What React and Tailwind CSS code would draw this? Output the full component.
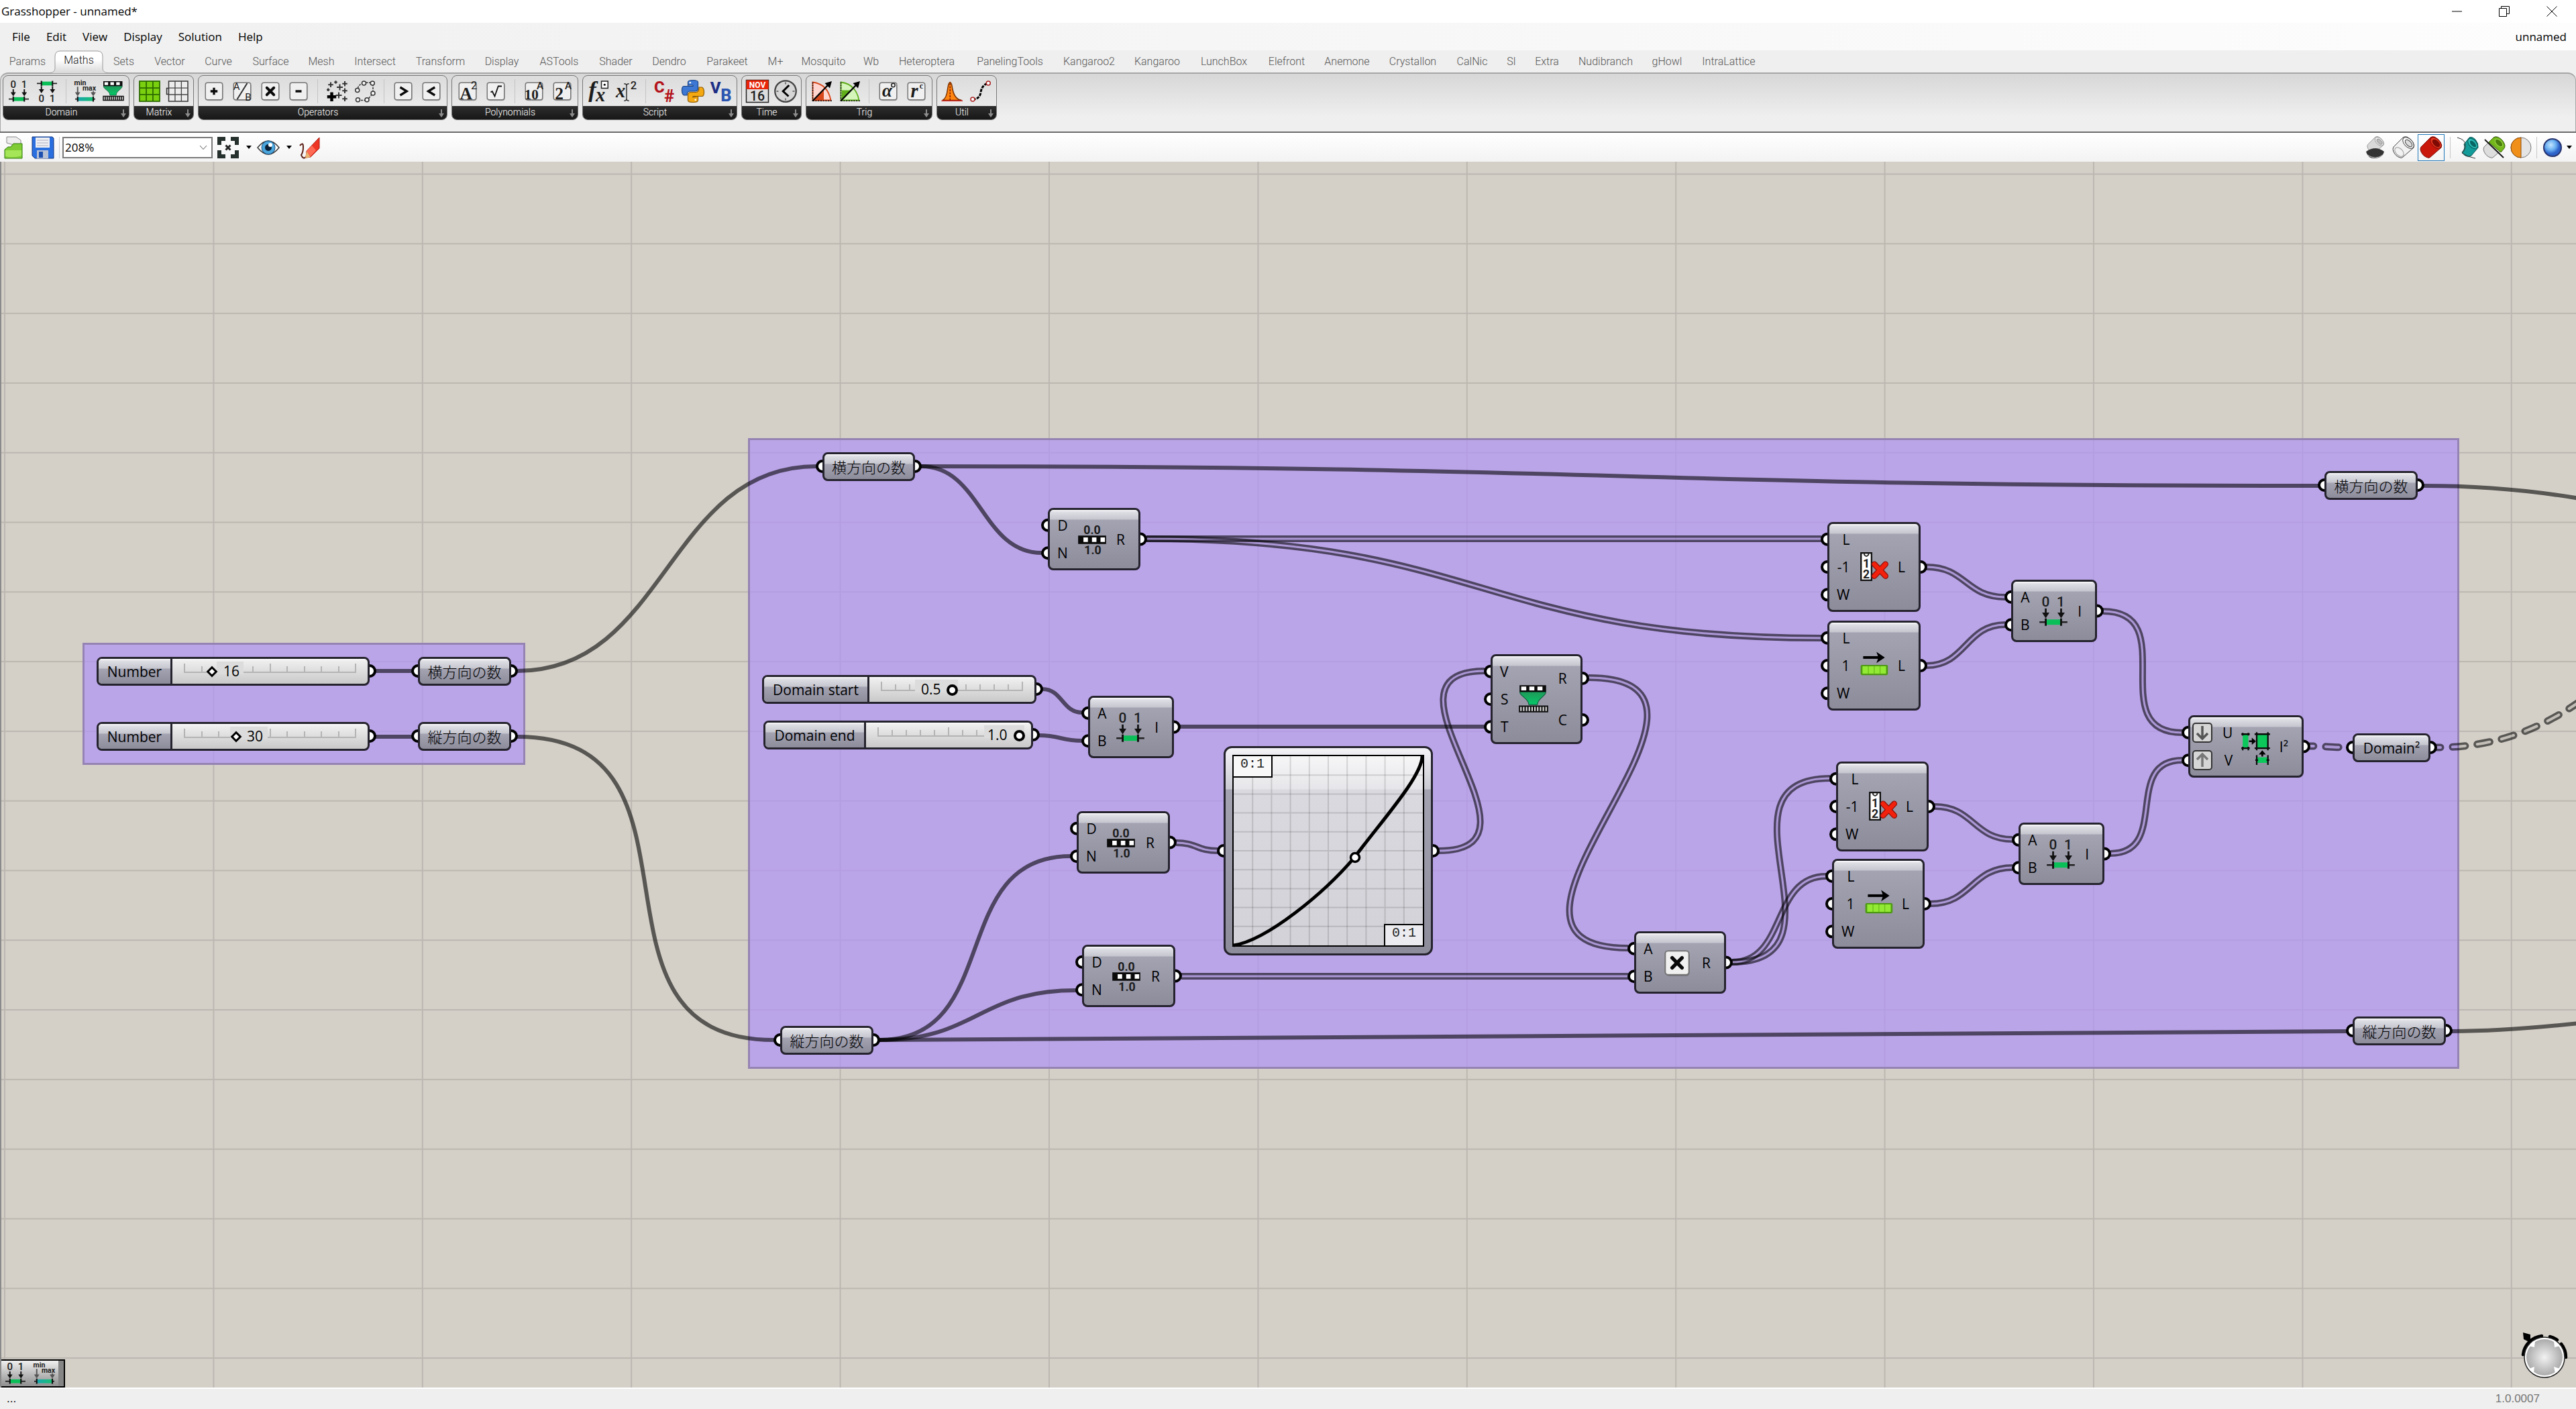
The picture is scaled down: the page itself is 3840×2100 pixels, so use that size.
import React from "react";

/* ---------- icons: component glyphs share a 24-unit grid ---------- */

function Icon({ size = "size-9", children }) {
  return (
    <svg viewBox="0 0 24 24" className={size + " shrink-0 overflow-visible"} aria-hidden="true">
      {children}
    </svg>
  );
}

const T = ({ x, y, s = 8, f = "Roboto", w = 700, c = "#1c1c1c", i, children }) => (
  <text x={x} y={y} fontSize={s} fontFamily={f + ", sans-serif"} fontWeight={w} fill={c} fontStyle={i ? "italic" : "normal"} textAnchor="middle">
    {children}
  </text>
);

const Down = ({ x, y1, y2, c = "#111" }) => (
  <g>
    <path d={`M${x} ${y1}V${y2 - 2}`} stroke={c} strokeWidth="1.3" />
    <path d={`M${x - 2.6} ${y2 - 4}h5.2l-2.6 4z`} fill={c} />
  </g>
);

const Bar = ({ y, a, b, fill = "#0bbf58" }) => (
  <g>
    <path d={`M2 ${y}H22`} stroke="#222" strokeWidth="1.2" />
    <rect x={a} y={y - 1.9} width={b - a} height="3.8" fill={fill} />
    <path d={`M${a} ${y - 2.6}v5.2M${b} ${y - 2.6}v5.2`} stroke="#111" strokeWidth="1.4" />
  </g>
);

const ConstructDomain = ({ size }) => (
  <Icon size={size}>
    <T x="6.5" y="8.6" s="10" w="500">0</T>
    <T x="17.3" y="8.6" s="10" w="500">1</T>
    <Down x={6.5} y1={10} y2={17} />
    <Down x={17.5} y1={10} y2={17} />
    <Bar y={19.8} a={6.5} b={17.5} />
  </Icon>
);

const DeconstructDomain = ({ size }) => (
  <Icon size={size}>
    <Bar y={4.3} a={6.5} b={17.5} />
    <Down x={6.5} y1={7} y2={14} />
    <Down x={17.5} y1={7} y2={14} />
    <T x="6.5" y="22.5" s="10" w="500">0</T>
    <T x="17.3" y="22.5" s="10" w="500">1</T>
  </Icon>
);

const FindDomain = ({ size }) => (
  <Icon size={size}>
    <defs>
      <linearGradient id="teal">
        <stop offset="0" stopColor="#1aa6b0" />
        <stop offset="1" stopColor="#16c070" />
      </linearGradient>
    </defs>
    <T x="7" y="6" s="7" w="700">min</T>
    <T x="16" y="11.500" s="7" w="700">max</T>
    <Down x={4.5} y1={7.5} y2={17} c="#555" />
    <Down x={20} y1={12} y2={17} c="#555" />
    <Bar y={19.8} a={4.5} b={20} fill="url(#teal)" />
  </Icon>
);

const Remap = ({ size }) => (
  <Icon size={size}>
    <defs>
      <linearGradient id="funnel" x1="0" y1="0" x2="0" y2="1">
        <stop offset="0" stopColor="#1f9a5a" />
        <stop offset="1" stopColor="#06c868" />
      </linearGradient>
    </defs>
    <path d="M2 2h19v5H2z" fill="#0a0a0a" />
    <path d="M3.2 3h3.6v2.8H3.2zM9 3h3.6v2.8H9zM14.8 3h3.6v2.8h-3.6z" fill="#fff" />
    <path d="M2.2 7h18.6c0 3-6 4.500-6 9H8.600c0-4.500-6.400-6-6.400-9z" fill="url(#funnel)" stroke="#0d5a37" strokeWidth=".5" />
    <path d="M1.500 16.500h21v5h-21z" fill="#111" />
    <path d="M3 17.500v3M5 17.500v3M7 17.500v3M9 17.500v3M11 17.500v3M13 17.500v3M15 17.500v3M17 17.500v3M19 17.500v3M21 17.500v3" stroke="#ddd" strokeWidth="1" />
  </Icon>
);

const RangeIcon = ({ size }) => (
  <Icon size={size}>
    <T x="12" y="8" s="8.500" w="700">0.0</T>
    <path d="M2 9.200h20v6H2z" fill="#0a0a0a" />
    <path d="M5.800 10.600h3.200v3.200H5.800zM11.900 10.600h3.200v3.200h-3.200zM18 10.600h3.200v3.200H18z" fill="#fff" />
    <T x="12.500" y="22.500" s="8.500" w="700">1.0</T>
  </Icon>
);

const CullIcon = ({ size }) => (
  <Icon size={size}>
    <rect x="3" y="2" width="7.500" height="19.500" fill="#fff" stroke="#111" strokeWidth="1.100" />
    <path d="M5.300 2v1.200q1.500 2.200 3 0V2" fill="none" stroke="#222" strokeWidth=".9" />
    <T x="6.800" y="12.500" s="8.500">1</T>
    <T x="6.800" y="20.300" s="8.500">2</T>
    <path d="M12.500 10l8 8.500M20.500 10l-8 8.500" stroke="#8d140b" strokeWidth="4.200" strokeLinecap="round" />
    <path d="M12.500 10l8 8.500M20.500 10l-8 8.500" stroke="#f3200c" strokeWidth="3" strokeLinecap="round" />
  </Icon>
);

const ShiftIcon = ({ size }) => (
  <Icon size={size}>
    <path d="M4.500 6.200h12" stroke="#000" strokeWidth="1.900" />
    <path d="M14 2.200l6 4-6 4 1.400-4z" fill="#000" />
    <rect x="2.700" y="11.500" width="19.500" height="7.300" rx="1" fill="#4d9a12" />
    <path d="M4 12.500h16.900v5.300H4z" fill="#93ea35" />
    <path d="M8.200 12.500v5.300M12.400 12.500v5.300M16.600 12.500v5.300" stroke="#6fc21c" strokeWidth=".7" />
  </Icon>
);

const Domain2Icon = ({ size }) => (
  <Icon size={size}>
    <path d="M2.500 3h4v10h-4zM12.500 3h8v10h-8zM12.500 19.500h8v4h-8z" fill="#0cc85b" />
    <path d="M1.500 3h6M1.500 13h6M2.500 2v2M6.500 2v2M2.500 12v2.500M6.500 12v2.500M11 3h11M11 13h11M12.500 1.500v13M20.500 1.500v13M12.500 18v7M20.500 18v7M11.500 21.500h2M19.500 21.500h2" stroke="#0a0a0a" strokeWidth="1.100" fill="none" />
    <path d="M7 8h3M16.500 19v-2" stroke="#000" strokeWidth="1.200" />
    <path d="M9 5.500l3 2.500-3 2.500zM14 17.500l2.500-3 2.500 3z" fill="#000" />
  </Icon>
);

const Key = ({ size, children }) => (
  <Icon size={size}>
    <rect x="4" y="4.500" width="17" height="17" rx="2.500" fill="#000" opacity=".25" />
    <rect x="3.500" y="3.500" width="17" height="17" rx="2" fill="#f0f0f0" stroke="#777" strokeWidth="1" />
    {children}
  </Icon>
);

const stroke = { stroke: "#0a0a0a", strokeWidth: 2.2, fill: "none" };

const PlusKey = () => <Key><path d="M12 8.500v7M8.500 12h7" {...stroke} /></Key>;
const DivKey = () => (
  <Key>
    <path d="M17 4L7 20" stroke="#333" strokeWidth="1.400" />
    <T x="6.500" y="10.500" s="10" w="400">A</T>
    <T x="18" y="21" s="10" w="400">B</T>
  </Key>
);
const TimesKey = ({ size }) => <Key size={size}><path d="M8.500 8.500l7 7M15.500 8.500l-7 7" stroke="#0a0a0a" strokeWidth="2.600" strokeLinecap="round" /></Key>;
const MinusKey = () => <Key><path d="M9 12h6" {...stroke} /></Key>;
const GtKey = () => <Key><path d="M9 8l6.500 4L9 16" {...stroke} /></Key>;
const LtKey = () => <Key><path d="M15.500 8L9 12l6.500 4" {...stroke} /></Key>;
const SquareKey = () => <Key><T x="10.500" y="20" s="17" f="Liberation Serif">A</T><T x="18.500" y="10" s="11" w="400">2</T></Key>;
const RootKey = () => <Key><path d="M7 13l1.500-1 2.500 5L14.500 7H18" stroke="#111" strokeWidth="1.200" fill="none" /></Key>;
const Pow10Key = () => <Key><T x="9.500" y="20" s="14" f="Liberation Serif">10</T><T x="18" y="10" s="10" w="500">A</T></Key>;
const Pow2Key = () => <Key><T x="9" y="20" s="17" f="Liberation Serif">2</T><T x="18" y="10" s="10" w="500">A</T></Key>;
const DegKey = () => <Key><T x="11" y="17.500" s="18" f="Liberation Serif" i>α</T><circle cx="17" cy="6" r="1.800" fill="none" stroke="#222" /></Key>;
const RadKey = () => <Key><T x="10" y="18" s="19" f="Liberation Serif" i>r</T><T x="17" y="9" s="8" f="Liberation Serif">c</T></Key>;

const MassAdd = () => (
  <Icon>
    <path d="M7 13v9M2.500 17.500h9" stroke="#000" strokeWidth="3" />
    <path d="M15 5v6M12 8h6M14 13v6M11 16h6M20 2v5M17.500 4.500h5M20 9v5M17.500 11.500h5M20 17v5M17.500 19.500h5M6 3v5M3.500 5.500h5M11 1.500v3M9.500 3h3M3.500 9v3M2 10.500h3" stroke="#333" strokeWidth="1.300" />
  </Icon>
);
const Relay = () => (
  <Icon>
    <g fill="#f5f5f5" stroke="#333" strokeWidth="1">
      <path d="M5 12Q4 6 10 4M13 3.500h6M20 5v8M19 15l-4 5M13 21H6" fill="none" strokeDasharray="2 1" />
      <circle cx="4.500" cy="11" r="2" /><circle cx="11" cy="4" r="2" /><circle cx="19.500" cy="4" r="2" /><circle cx="20" cy="14" r="2" /><circle cx="14" cy="20.500" r="2" /><circle cx="5" cy="20.500" r="2" />
    </g>
  </Icon>
);
const MatrixGreen = () => (
  <Icon>
    <rect x="2" y="2" width="20" height="20" fill="#7ad00f" stroke="#2c6a00" strokeWidth="1.200" />
    <path d="M8.700 2v20M15.300 2v20M2 8.700h20M2 15.300h20" stroke="#2c6a00" strokeWidth="1.200" />
  </Icon>
);
const MatrixWhite = () => (
  <Icon>
    <path d="M4 9H1v6h3" fill="none" stroke="#333" />
    <rect x="3" y="2" width="19" height="20" fill="#ececec" stroke="#333" strokeWidth="1" />
    <path d="M9.300 2v20M15.600 2v20M3 8.700h19M3 15.300h19" stroke="#444" strokeWidth=".9" />
  </Icon>
);
const FxIcon = () => (
  <Icon>
    <T x="6" y="18" s="23" f="Liberation Serif" i>f</T>
    <T x="14" y="22" s="19" f="Liberation Serif" i>x</T>
    <rect x="15" y="2" width="6.500" height="7" fill="#fff" stroke="#222" /><circle cx="18.200" cy="5.500" r="1" />
  </Icon>
);
const ExprIcon = () => (
  <Icon>
    <T x="6" y="18" s="19" f="Liberation Serif" i>x</T>
    <path d="M9.500 4.500q2.500 0 2.500 2v13q0 2 2.500 2M14.500 4.500q-2.500 0-2.500 2M9.500 21.500q2.500 0 2.500-2" stroke="#333" fill="none" />
    <T x="19" y="10" s="11" w="500">2</T>
  </Icon>
);
const CSharp = () => <Icon><T x="6.500" y="13" s="16" c="#b3131b" w="800">C</T><T x="16.500" y="22.500" s="17" c="#b3131b" w="800">#</T></Icon>;
const Python = () => (
  <Icon>
    <path d="M7 7V3q0-2 5-2t5 2v6q0 3-3 3H9q-3 0-3 4H3q-2-1-2-5t2-4h9V6H7z" fill="#3c78d4" stroke="#1b4383" strokeWidth=".8" />
    <path d="M17 17v4q0 2-5 2t-5-2v-5q0-3 3-3h5q3 0 3-5h3q2 1 2 5t-2 4h-9v1z" fill="#f4a913" stroke="#8d5b05" strokeWidth=".8" />
    <circle cx="9.200" cy="3.500" r=".9" fill="#fff" /><circle cx="14.500" cy="20.500" r=".9" fill="#fff" />
  </Icon>
);
const VB = () => <Icon><T x="6.500" y="14" s="16" c="#1d2f86" w="800">V</T><T x="17" y="22" s="17" c="#2b55b0" w="800">B</T></Icon>;
const Calendar = () => (
  <Icon>
    <rect x="1" y="1" width="22" height="22" fill="#ddd" stroke="#222" />
    <path d="M1 1h22v9H1z" fill="#ea2409" />
    <T x="12" y="8.500" s="8" c="#fff">NOV</T>
    <T x="12" y="21" s="13" w="500">16</T>
  </Icon>
);
const Clock = () => (
  <Icon>
    <circle cx="12" cy="12" r="10.500" fill="#d6d6d6" stroke="#444" strokeWidth="1.500" />
    <path d="M12 3v2M12 19v2M3 12h2M19 12h2" stroke="#555" />
    <path d="M15.500 6L9.500 12l5.500 5" stroke="#000" strokeWidth="2" fill="none" />
  </Icon>
);
const Trig = ({ fill, soft, dark }) => (
  <Icon>
    <path d="M3 3Q18 5 21 21H3z" fill={soft} stroke={dark} strokeWidth="1.200" />
    <path d={fill} fill={dark} />
    <path d="M3 22V3M3 21.500h19" stroke="#111" strokeDasharray="1.500 1" />
    <path d="M3 21.500L18 6" stroke="#000" strokeWidth="1.500" />
    <path d="M22 2l-2 7-5-5z" fill="#000" />
  </Icon>
);
const SinIcon = () => <Trig soft="#ffd5cf" dark="#d9481c" fill="M4 21L14 11V21z" />;
const CosIcon = () => <Trig soft="#d5f5bb" dark="#5fae1a" fill="M4 11H13L4 20z" />;
const Gauss = () => (
  <Icon>
    <path d="M2 21Q6 19 7 10Q8 3 9.500 3T12 10Q14 20 21 21z" fill="#ff8410" stroke="#7a3100" />
    <path d="M9.500 4v17" stroke="#7a1c00" strokeDasharray="2 1" />
    <path d="M1 21.500h21" stroke="#c22" strokeWidth="1" />
  </Icon>
);
const SCurve = () => (
  <Icon>
    <path d="M4 20Q11 20 12 13T19 4" fill="none" stroke="#000" strokeWidth="2" strokeDasharray="3 1" />
    <circle cx="4" cy="20" r="2" fill="#fff" stroke="#a22" /><circle cx="19.500" cy="4" r="2" fill="#fff" stroke="#a22" />
  </Icon>
);

/* ---------- window header ---------- */

const TABS = [
  ["Params", 82], ["Maths", 71], ["Sets", 63], ["Vector", 74], ["Curve", 71], ["Surface", 85], ["Mesh", 66], ["Intersect", 94],
  ["Transform", 101], ["Display", 82], ["ASTools", 89], ["Shader", 80], ["Dendro", 79], ["Parakeet", 94], ["M+", 50], ["Mosquito", 93],
  ["Wb", 49], ["Heteroptera", 117], ["PanelingTools", 131], ["Kangaroo2", 105], ["Kangaroo", 98], ["LunchBox", 101], ["Elefront", 86],
  ["Anemone", 94], ["Crystallon", 102], ["CalNic", 75], ["SI", 42], ["Extra", 64], ["Nudibranch", 111], ["gHowl", 72], ["IntraLattice", 112],
];

const RIBBON = [
  ["Domain", [ConstructDomain, DeconstructDomain, null, FindDomain, Remap]],
  ["Matrix", [MatrixGreen, MatrixWhite]],
  ["Operators", [PlusKey, DivKey, TimesKey, MinusKey, null, MassAdd, Relay, null, GtKey, LtKey]],
  ["Polynomials", [SquareKey, RootKey, null, Pow10Key, Pow2Key]],
  ["Script", [FxIcon, ExprIcon, null, CSharp, Python, VB]],
  ["Time", [Calendar, Clock]],
  ["Trig", [SinIcon, CosIcon, null, DegKey, RadKey]],
  ["Util", [Gauss, SCurve]],
];

function TitleBar() {
  return (
    <header className="flex h-[34px] items-center justify-between bg-white pl-0.5">
      <h1 className="text-[17px] leading-6">Grasshopper - unnamed*</h1>
      <div className="flex">
        <button aria-label="Minimize" className="flex h-8 w-[70px] items-center justify-center">
          <svg className="size-4" viewBox="0 0 16 16"><path d="M0 8h15" stroke="#000" /></svg>
        </button>
        <button aria-label="Restore" className="flex h-8 w-[70px] items-center justify-center">
          <svg className="size-4" viewBox="0 0 16 16" fill="none" stroke="#000"><path d="M.5 3.500h11v12H.500zM3.500 3.500v-3h12v11h-4" /></svg>
        </button>
        <button aria-label="Close" className="flex h-8 w-[72px] items-center justify-center">
          <svg className="size-4" viewBox="0 0 16 16"><path d="M.5 .5l15 15M15.500 .5l-15 15" stroke="#000" /></svg>
        </button>
      </div>
    </header>
  );
}

function MenuBar() {
  return (
    <nav className="flex h-[41px] items-center justify-between bg-linear-to-r from-[#f0f0f0] to-[#fdfdfd] pr-3.5 pl-1.5 text-[17px] leading-6">
      <div className="flex">
        {["File", "Edit", "View", "Display", "Solution", "Help"].map((m) => (
          <button key={m} className="px-3">{m}</button>
        ))}
      </div>
      <button>unnamed</button>
    </nav>
  );
}

function Tabs() {
  return (
    <div role="tablist" className="flex h-[33px] bg-[#efefef] font-['Roboto',sans-serif] text-base font-light text-[#555]">
      {TABS.map(([name, width]) =>
        name === "Maths" ? (
          <button key={name} role="tab" aria-selected="true" className="relative z-10 h-[34px] pb-1 text-[#111]" style={{ width }}>
            <svg viewBox="0 0 87 34" className="absolute top-0 -left-2 h-[34px] w-[87px]" aria-hidden="true">
              <defs>
                <linearGradient id="tab" x1="0" y1="0" x2="0" y2="1">
                  <stop offset=".4" stopColor="#fff" />
                  <stop offset="1" stopColor="#d8d8d8" />
                </linearGradient>
              </defs>
              <path d="M0 33.500C5 33.500 8 31 8 26V9Q8 1 16 1H71Q79 1 79 9V26C79 31 82 33.500 87 33.500V34H0z" fill="url(#tab)" />
              <path d="M0 33.500C5 33.500 8 31 8 26V9Q8 1 16 1H71Q79 1 79 9V26C79 31 82 33.500 87 33.500" fill="none" stroke="#999" />
            </svg>
            <span className="relative">{name}</span>
          </button>
        ) : (
          <button key={name} role="tab" aria-selected="false" className={name === "Params" ? "shrink-0 pr-3.5 text-right" : "shrink-0"} style={{ width }}>
            {name}
          </button>
        )
      )}
    </div>
  );
}

function Ribbon() {
  return (
    <div className="bg-[#efefef]">
      <div className="flex h-[88px] gap-1.5 rounded-t-xl border-t-2 border-r border-l border-[#a6a6a6] bg-linear-to-b from-[#d7d7d7] to-[#efefef] to-75% pt-0.5 pl-[3px]">
        {RIBBON.map(([title, items]) => (
          <section key={title} className="h-[67px] overflow-hidden rounded-lg border border-[#777] bg-linear-to-b from-[#dcdcdc] to-[#f0f0f0] font-['Roboto',sans-serif]">
            <div className="flex h-[45px] items-center px-0.5">
              {items.map((Item, i) =>
                Item ? (
                  <button key={i} aria-label={title + " tool " + (i + 1)} className="flex h-10 w-[42px] items-center justify-center"><Item /></button>
                ) : (
                  <span key={i} className="flex w-[15px] justify-center"><span className="h-9 w-px bg-[#c4c4c4]" /></span>
                )
              )}
            </div>
            <div className="flex h-[21px] items-center bg-linear-to-b from-[#2e2e2e] to-[#161616] text-sm font-light text-white">
              <h2 className="grow pb-1 text-center leading-4">{title}</h2>
              <svg viewBox="0 0 12 14" className="mr-0.5 h-3.5 w-3" aria-hidden="true"><path d="M5 1h2v6h3l-4 6-4-6h3z" fill="#8d8d8d" /></svg>
            </div>
          </section>
        ))}
      </div>
    </div>
  );
}

const Caret = () => <svg viewBox="0 0 8 5" className="h-[5px] w-2" aria-hidden="true"><path d="M0 0h8L4 5z" /></svg>;

const Tube = ({ a, b, c, line }) => (
  <g stroke={line} strokeWidth="1">
    <path d="M16 2L2 16q-2 3 0 7 3 7 10 9 2 1 4-1L32 17q2-3-1-8-4-6-9-8-4-1-6 1z" fill={a} />
    <ellipse cx="24" cy="10" rx="10" ry="6" transform="rotate(45 24 10)" fill={b} />
    <ellipse cx="24.500" cy="10.500" rx="6.500" ry="3.500" transform="rotate(45 24.500 10.500)" fill={c} />
  </g>
);

function Tool({ label, children, className = "" }) {
  return (
    <button aria-label={label} className={"flex h-10 shrink-0 items-center justify-center " + className}>
      <svg viewBox="0 0 34 34" className="size-[34px] overflow-visible">{children}</svg>
    </button>
  );
}

function CanvasToolbar() {
  return (
    <div className="flex h-[45px] items-center border-t-2 border-[#6b6b6b] bg-linear-to-b from-white to-[#f3f3f3]">
      <Tool label="Open" className="ml-1">
        <path d="M6 10V1h14l7 5v10z" fill="#eee" stroke="#888" />
        <path d="M3 20l5-4h4l4-5h13v22H3z" fill="#7fcc36" stroke="#2f7a0a" />
        <path d="M4 21h24v8q-12 4-24 1z" fill="#a5e558" />
      </Tool>
      <Tool label="Save" className="ml-[9px]">
        <path d="M3 1h28l2 2v30H5l-4-4V1z" fill="#2a6fe0" stroke="#14367f" />
        <path d="M6 2h21v15H6z" fill="#eef0f4" /><path d="M8 6h17M8 10h17M8 14h17" stroke="#aab" />
        <path d="M8 21h17v12H8z" fill="#b9c2d4" /><path d="M11 23h6v9h-6z" fill="#1d4fb0" />
      </Tool>
      <span className="ml-[7px] h-8 w-px bg-[#d0d0d0]" />
      <span className="relative ml-1 flex">
        <select aria-label="Zoom" className="h-8 w-56 appearance-none border-2 border-[#7a7a7a] bg-white px-0.5 text-[17px] leading-6 outline-none">
          <option>208%</option>
        </select>
        <svg viewBox="0 0 12 8" className="absolute top-3 right-2 h-2 w-3" fill="none" stroke="#555" aria-hidden="true"><path d="M1 1l5 5.500L11 1" /></svg>
      </span>
      <Tool label="Zoom extents" className="ml-1.5">
        <path d="M1 1h12v6H7v6H1zM33 1H21v6h6v6h6zM1 33h12v-6H7v-6H1zM33 33H21v-6h6v-6h6z" fill="#26302c" />
        <path d="M13.500 13.500l7 7M20.500 13.500l-7 7" stroke="#222" strokeWidth="3" />
      </Tool>
      <span className="ml-2.5"><Caret /></span>
      <Tool label="Preview" className="ml-2">
        <path d="M1 17Q17-3 33 17Q17 37 1 17z" fill="#fff" stroke="#333" strokeWidth="1.500" />
        <circle cx="17" cy="17" r="10" fill="#4aa6dd" stroke="#1b4e7c" /><circle cx="17" cy="17" r="5" fill="#0b2036" /><circle cx="20" cy="13" r="3" fill="#fff" />
      </Tool>
      <span className="ml-2.5"><Caret /></span>
      <Tool label="Sketch" className="ml-2">
        <path d="M4 14q5-6 5 2T6 28q3 8 8 2" fill="none" stroke="#5a1d14" strokeWidth="2" />
        <path d="M33 2v16L20 31l-7 1 1-10z" fill="#ee3524" stroke="#a3160c" /><path d="M22 14l6 7-8 9-6-8z" fill="#ff6a55" /><path d="M12 33l2-11 6 9z" fill="#e9b26f" />
      </Tool>

      <div className="ml-auto flex items-center pr-1.5">
        <Tool label="Preview off">
          <g transform="translate(4 0) scale(.78)"><Tube a="#d8d8d8" b="#eee" c="#bbb" line="#888" /></g>
          <path d="M3 23q14-10 27 0q-2 9-13 10T3 23z" fill="#333" /><path d="M5 28q12 8 23 0" fill="none" stroke="#ccc" />
        </Tool>
        <Tool label="Wireframe" className="ml-2"><Tube a="#f2f2f2" b="#fff" c="#ddd" line="#444" /><ellipse cx="10.500" cy="23.500" rx="8" ry="5" transform="rotate(45 10.500 23.500)" fill="none" stroke="#999" /></Tool>
        <Tool label="Shaded" className="ml-1 w-10 border border-[#1f78b8]"><Tube a="#c9170c" b="#e5371f" c="#7d0a04" line="#7d0a04" /></Tool>
        <span className="mx-2 h-8 w-px bg-[#c8c8c8]" />
        <Tool label="Selected preview">
          <path d="M12 12L20 2q4-2 9 3 5 6 4 12L23 29q-8 4-14-5 6-6 3-12z" fill="#129b98" stroke="#0a5553" />
          <ellipse cx="25" cy="11" rx="9" ry="5.500" transform="rotate(48 25 11)" fill="#2cc1bb" stroke="#0a5553" />
          <ellipse cx="25.500" cy="11.500" rx="6" ry="3" transform="rotate(48 25.500 11.500)" fill="#0a6664" />
          <path d="M2 2q12 3 12 11T9 25q8 6 20 8" fill="none" stroke="#333" />
        </Tool>
        <Tool label="Clipped preview" className="ml-1.5">
          <Tube a="#ddd" b="#fff" c="#ccc" line="#777" />
          <path d="M9 9L16 2q6-3 13 4 6 8 3 12l-5 6z" fill="#74b81c" stroke="#39650a" />
          <ellipse cx="24" cy="10" rx="7" ry="4" transform="rotate(45 24 10)" fill="#4b7d0e" stroke="#9bd84a" />
          <path d="M3 5l28 27" stroke="#111" strokeWidth="1.800" />
        </Tool>
        <Tool label="Material" className="ml-1.5"><circle cx="17" cy="17" r="15" fill="#e4e4e4" stroke="#777" /><path d="M17 2a15 15 0 0 0 0 30z" fill="#f0901a" stroke="#8d4a06" /></Tool>
        <span className="mx-1.5 h-8 w-px bg-[#c8c8c8]" />
        <Tool label="Mesh quality">
          <defs><radialGradient id="ball" cx=".4" cy=".35"><stop offset="0" stopColor="#c4e6ff" /><stop offset=".6" stopColor="#69aef0" /><stop offset="1" stopColor="#2d62c8" /></radialGradient></defs>
          <circle cx="17" cy="17" r="13" fill="url(#ball)" stroke="#27336e" strokeWidth="2" />
        </Tool>
        <span className="ml-1"><Caret /></span>
      </div>
    </div>
  );
}

/* ---------- canvas: positions are diagram coordinates ---------- */

const TOP = 241;

const GROUPS = [[123, 958, 660, 182], [1115, 653, 2551, 940]];

const YOKO = "横方向の数";
const TATE = "縦方向の数";

const PARAMS = [
  [623, 979, 139, YOKO], [623, 1076, 139, TATE], [1226, 674, 138, YOKO], [1163, 1529, 139, TATE],
  [3465, 702, 139, YOKO], [3507, 1515, 139, TATE], [3507, 1093, 116, "Domain²"],
];

const SLIDERS = [
  { x: 144, y: 979, w: 407, label: "Number", split: 112, v: 16, max: 100, text: "16", textX: 76, fade: "left-[66px] w-[40px]" },
  { x: 144, y: 1076, w: 407, label: "Number", split: 112, v: 30, max: 100, text: "30", textX: 111, fade: "left-[86px] w-[56px]" },
  { x: 1136, y: 1006, w: 409, label: "Domain start", split: 159, v: 5, max: 10, text: "0.5", textX: 77, round: true, fade: "left-[68px] w-[64px]" },
  { x: 1138, y: 1074, w: 402, label: "Domain end", split: 152, v: 10, max: 10, text: "1.0", textX: 181, round: true, fade: "left-[176px] w-[60px]" },
];

const NODES = [
  { x: 1562, y: 757, w: 138, h: 93, in: ["D", "N"], out: ["R"], icon: RangeIcon },
  { x: 1622, y: 1037, w: 128, h: 93, in: ["A", "B"], out: ["I"], icon: ConstructDomain },
  { x: 1605, y: 1209, w: 139, h: 93, in: ["D", "N"], out: ["R"], icon: RangeIcon },
  { x: 1613, y: 1408, w: 139, h: 93, in: ["D", "N"], out: ["R"], icon: RangeIcon },
  { x: 2222, y: 975, w: 137, h: 134, in: ["V", "S", "T"], out: ["R", "C"], icon: Remap },
  { x: 2436, y: 1388, w: 137, h: 93, in: ["A", "B"], out: ["R"], icon: TimesKey },
  { x: 2724, y: 778, w: 139, h: 134, in: ["L", "-1", "W"], out: ["L"], icon: CullIcon },
  { x: 2724, y: 925, w: 139, h: 134, in: ["L", "1", "W"], out: ["L"], icon: ShiftIcon },
  { x: 2998, y: 864, w: 128, h: 93, in: ["A", "B"], out: ["I"], icon: ConstructDomain },
  { x: 2737, y: 1135, w: 138, h: 134, in: ["L", "-1", "W"], out: ["L"], icon: CullIcon },
  { x: 2731, y: 1280, w: 138, h: 134, in: ["L", "1", "W"], out: ["L"], icon: ShiftIcon },
  { x: 3009, y: 1226, w: 128, h: 93, in: ["A", "B"], out: ["I"], icon: ConstructDomain },
  { x: 3262, y: 1066, w: 172, h: 93, in: ["U", "V"], out: ["I²"], icon: Domain2Icon, flags: true },
];

const GRAPH = { x: 1824, y: 1112, w: 312, h: 312 };

const SINGLE = [
  [551, 1000, 623, 1000], [551, 1098, 623, 1098], [762, 1000, 1226, 695], [762, 1098, 1163, 1550],
  [1364, 695, 1562, 824], [1364, 695, 3465, 724], [1545, 1027, 1622, 1062], [1540, 1096, 1622, 1104],
  [1750, 1083, 2222, 1083], [1302, 1550, 1605, 1276], [1302, 1550, 1613, 1476], [1302, 1550, 3507, 1537],
];
const DOUBLE = [
  [1700, 803, 2724, 803], [1700, 803, 2724, 951], [1744, 1256, 1824, 1268], [2136, 1268, 2222, 1000],
  [2359, 1010, 2436, 1413], [1752, 1455, 2436, 1455], [2573, 1434, 2737, 1160], [2573, 1434, 2731, 1306],
  [2863, 845, 2998, 890], [2863, 992, 2998, 931], [3126, 911, 3262, 1092], [2875, 1202, 3009, 1251],
  [2869, 1347, 3009, 1293], [3137, 1272, 3262, 1133],
];

function curve([x1, y1, x2, y2]) {
  const d = Math.max((x2 - x1) / 2, Math.abs(y2 - y1) * 0.71);
  return `M${x1 + 9} ${y1}C${x1 + d} ${y1} ${x2 - d} ${y2} ${x2 - 9} ${y2}`;
}

const portY = (n, i, count) => n.y + 5 + ((n.h - 10) * (i + 0.5)) / count;

const GRIPS = [
  ...NODES.flatMap((n) => [
    ...n.in.map((_, i) => [n.x, portY(n, i, n.in.length)]),
    ...n.out.map((_, i) => [n.x + n.w, portY(n, i, n.out.length)]),
  ]),
  ...PARAMS.flatMap(([x, y, w]) => [[x, y + 21], [x + w, y + 21]]),
  ...SLIDERS.map((s) => [s.x + s.w, s.y + 21]),
  [GRAPH.x, 1268], [GRAPH.x + GRAPH.w, 1268],
];

function HollowWire({ id, d, dashed }) {
  const dash = dashed ? { strokeDasharray: "19 18", strokeDashoffset: 12, strokeLinecap: "round" } : {};
  return (
    <g fill="none">
      <mask id={id} maskUnits="userSpaceOnUse" x="0" y="0" width="4000" height="2200">
        <rect width="4000" height="2200" fill="#fff" />
        <path d={d} stroke="#222" strokeWidth={dashed ? 4 : 3} {...dash} />
      </mask>
      <path d={d} stroke="#000" strokeOpacity=".58" strokeWidth={dashed ? 11 : 10} mask={`url(#${id})`} {...dash} />
    </g>
  );
}

function Wires() {
  return (
    <svg className="absolute inset-0 h-full w-full" aria-hidden="true">
      <g transform={`translate(0 ${-TOP})`}>
        <g fill="none" stroke="#000" strokeOpacity=".58" strokeWidth="6">
          {SINGLE.map((w) => <path key={w.join()} d={curve(w)} />)}
          <path d="M3613 724C3700 724 3780 732 3845 743" />
          <path d="M3655 1537C3720 1537 3780 1532 3845 1525" />
        </g>
        {DOUBLE.map((w, i) => <HollowWire key={i} id={"wire" + i} d={curve(w)} />)}
        <HollowWire id="tree0" dashed d="M3442 1112C3460 1112 3480 1114 3498 1114" />
        <HollowWire id="tree1" dashed d="M3631 1114C3700 1114 3770 1098 3845 1046" />
        {GRIPS.map(([x, y]) => <circle key={x + "," + y} cx={x} cy={y} r="8" fill="#fff" stroke="#000" strokeWidth="4" />)}
      </g>
    </svg>
  );
}

const at = (x, y, w, h) => ({ left: x, top: y - TOP, width: w, height: h });

const SHELL = "absolute rounded-lg border-3 border-[#25232d] bg-[linear-gradient(#ffffff,#dedee5_3px,#c6c6cf_14px,#a3a3b2_15px,#8c8c9b)]";

function Param({ x, y, w, text }) {
  return (
    <div className={SHELL + " flex items-center justify-center whitespace-nowrap"} style={at(x, y, w, 43)}>
      {text === "Domain²" ? (
        <span className="text-[21px] leading-7">{text}</span>
      ) : (
        <span className="pb-0.5 font-['Noto_Sans_CJK_JP',sans-serif] text-[22px] leading-7 font-light">{text}</span>
      )}
    </div>
  );
}

function Slider({ s }) {
  return (
    <label className="absolute flex overflow-hidden rounded-lg border-3 border-[#25232d] bg-[linear-gradient(#ffffff,#eeeeee_3px,#c9c9c9)] text-[21px] leading-7" style={at(s.x, s.y, s.w, 43)}>
      <span className="flex shrink-0 items-center justify-center border-r-3 border-[#25232d] bg-[linear-gradient(#ffffff,#dedee5_3px,#c6c6cf_14px,#a3a3b2_15px,#8c8c9b)]" style={{ width: s.split - 2 }}>
        {s.label}
      </span>
      <span className="relative grow">
        <span className="absolute inset-x-[17px] top-2 flex h-[13px] items-end justify-between border-b-2 border-[#b4b4b4]">
          {[0, 1, 2, 3, 4, 5, 6, 7, 8, 9, 10].map((i) => (
            <span key={i} className={i % 5 === 0 ? "h-3 w-0.5 bg-[#b4b4b4]" : "h-2 w-0.5 bg-[#b4b4b4]"} />
          ))}
        </span>
        <span className={"absolute top-1 h-[19px] bg-[#dcdcdc] " + s.fade} />
        <input
          type="range"
          min="0"
          max={s.max}
          defaultValue={s.v}
          className={
            s.round
              ? "absolute top-[9px] right-[9px] left-[9px] h-5 appearance-none bg-transparent [&::-webkit-slider-thumb]:size-[17px] [&::-webkit-slider-thumb]:appearance-none [&::-webkit-slider-thumb]:rounded-full [&::-webkit-slider-thumb]:border-4 [&::-webkit-slider-thumb]:border-black [&::-webkit-slider-thumb]:bg-white"
              : "absolute top-[9px] right-3 left-3 h-5 appearance-none bg-transparent [&::-webkit-slider-thumb]:size-3 [&::-webkit-slider-thumb]:rotate-45 [&::-webkit-slider-thumb]:appearance-none [&::-webkit-slider-thumb]:border-3 [&::-webkit-slider-thumb]:border-black [&::-webkit-slider-thumb]:bg-white"
          }
        />
        <span className="absolute top-1" style={{ left: s.textX }}>{s.text}</span>
      </span>
    </label>
  );
}

const Flag = ({ up }) => (
  <svg viewBox="0 0 30 30" className="size-[30px]" aria-hidden="true">
    <rect x="1" y="1" width="28" height="28" rx="4" fill="#d6d6d6" stroke="#333" strokeWidth="2" />
    <path d={up ? "M15 25V6M7 14l8-8 8 8" : "M15 5v19M7 16l8 8 8-8"} fill="none" stroke={up ? "#777" : "#555"} strokeWidth="3.500" />
  </svg>
);

function Node({ n }) {
  const Glyph = n.icon;
  return (
    <div className={SHELL + " flex py-0.5 text-[21px] leading-7"} style={at(n.x, n.y, n.w, n.h)}>
      {n.flags && (
        <div className="flex flex-col pl-[3px]">
          <span className="flex grow items-center"><Flag /></span>
          <span className="flex grow items-center"><Flag up /></span>
        </div>
      )}
      <div className={n.flags ? "flex flex-col pl-[15px] text-right" : "flex flex-col pl-[11px] text-right"}>
        {n.in.map((p) => <span key={p} className="flex grow items-center justify-end">{p}</span>)}
      </div>
      <div className="flex min-w-0 grow items-center justify-center"><Glyph size="size-[50px]" /></div>
      <div className="flex flex-col pr-5">
        {n.out.map((p) => <span key={p} className="flex grow items-center">{p}</span>)}
      </div>
    </div>
  );
}

const TENTHS = [1, 2, 3, 4, 5, 6, 7, 8, 9];

function GraphMapper() {
  return (
    <div className="absolute rounded-xl border-3 border-[#25232d] bg-[linear-gradient(#f4f4f7,#c9c9d2_61px,#a3a3b2_62px,#8c8c9b)] p-2.5" style={at(GRAPH.x, GRAPH.y, GRAPH.w, GRAPH.h)}>
      <div className="relative h-full border-2 border-black bg-[linear-gradient(#f6f6f7,#e6e6ea_49px,#d9d9df_50px,#d2d2d8)] font-['Liberation_Mono',monospace] text-xl leading-6 text-[#222]">
        <svg viewBox="0 0 282 282" className="absolute inset-0 h-full w-full overflow-visible" fill="none" aria-hidden="true">
          {TENTHS.map((i) => <path key={i} d={`M${i * 28.2} 0V282M0 ${i * 28.2}H282`} stroke="#000" strokeOpacity=".13" strokeWidth="2" />)}
          <path d="M0 282C50 274 135 204 180 151C221 96 281 30 281 0" stroke="#000" strokeWidth="5" />
          <circle cx="181" cy="151" r="6.500" fill="#fff" stroke="#000" strokeWidth="3.500" />
        </svg>
        <span className="absolute top-0 left-0 h-8 w-[58px] border-r-2 border-b-2 border-black bg-[#f8f8f9] text-center">0:1</span>
        <span className="absolute right-0 bottom-0 h-8 w-[58px] border-t-2 border-l-2 border-black bg-[#ececf0] text-center">0:1</span>
      </div>
    </div>
  );
}

function Compass() {
  return (
    <svg viewBox="-38 -42 76 80" className="absolute right-[9px] bottom-[7px] h-20 w-[76px]" aria-label="View compass" role="img">
      <defs><radialGradient id="dial"><stop offset="0" stopColor="#f2f2f2" /><stop offset="1" stopColor="#ababab" /></radialGradient></defs>
      <path d="M-32 -4A32 32 0 0 1 -4 -32M8 -31A32 32 0 0 1 19 -26M25 -20A32 32 0 0 1 32 0" fill="none" stroke="#000" strokeWidth="4.500" strokeLinecap="round" />
      <path d="M-32 -37l11 3v8l-2 3-8-4z" fill="#000" />
      <circle r="30" fill="#fff" stroke="#222" strokeWidth="1.500" />
      <circle r="27" fill="url(#dial)" />
      <path d="M-23 -17l8 2 1-9zM23 -17l-8 2-1-9zM-23 17l8-3-1 9zM23 17l-9-3 2 10z" fill="#fff" />
    </svg>
  );
}

function Canvas() {
  return (
    <main className="relative min-h-[1400px] grow overflow-hidden border-l-2 border-[#8a8a8a] bg-[#d4d0c8]">
      <div className="absolute inset-y-0 right-0 -left-0.5">
        <svg className="absolute inset-0 h-full w-full" aria-hidden="true">
          <defs>
            <pattern id="grid" x="6" y="17.500" width="311.400" height="103.800" patternUnits="userSpaceOnUse">
              <path d="M0 0h2v103.800H0zM2 0h309.400v2h-309.400z" fill="#bcb8b1" />
            </pattern>
          </defs>
          <rect width="100%" height="100%" fill="url(#grid)" />
        </svg>
        {GROUPS.map(([x, y, w, h]) => (
          <div key={x} className="absolute border-3 border-[#9583b3] bg-[#b093f6]/70" style={at(x, y, w, h)} />
        ))}
        <Wires />
        {PARAMS.map(([x, y, w, text]) => <Param key={x + "," + y} x={x} y={y} w={w} text={text} />)}
        {SLIDERS.map((s) => <Slider key={s.y} s={s} />)}
        {NODES.map((n) => <Node key={n.x + "," + n.y} n={n} />)}
        <GraphMapper />
      </div>
      <div className="absolute bottom-0 left-0 flex h-[42px] items-center border-2 border-l-0 border-black bg-linear-to-b from-[#f0f0f0] to-[#8f8f8f]">
        <button aria-label="Construct Domain" className="flex w-[42px] justify-center"><ConstructDomain /></button>
        <button aria-label="Bounds" className="flex w-[43px] justify-center"><FindDomain /></button>
        <span className="h-full w-2 bg-[#858585]" />
      </div>
      <Compass />
    </main>
  );
}

export default function App() {
  return (
    <div className="flex min-h-screen flex-col overflow-hidden bg-[#efefef] font-['Open_Sans','Noto_Sans_CJK_JP',sans-serif] text-black">
      <TitleBar />
      <MenuBar />
      <Tabs />
      <Ribbon />
      <CanvasToolbar />
      <Canvas />
      <footer className="flex h-8 items-center justify-between border-t-2 border-white bg-[#efefef] pr-[54px] pl-2.5 font-['Liberation_Sans',sans-serif] text-[17px] text-[#757575]">
        <span className="text-black">...</span>
        <span>1.0.0007</span>
      </footer>
    </div>
  );
}
